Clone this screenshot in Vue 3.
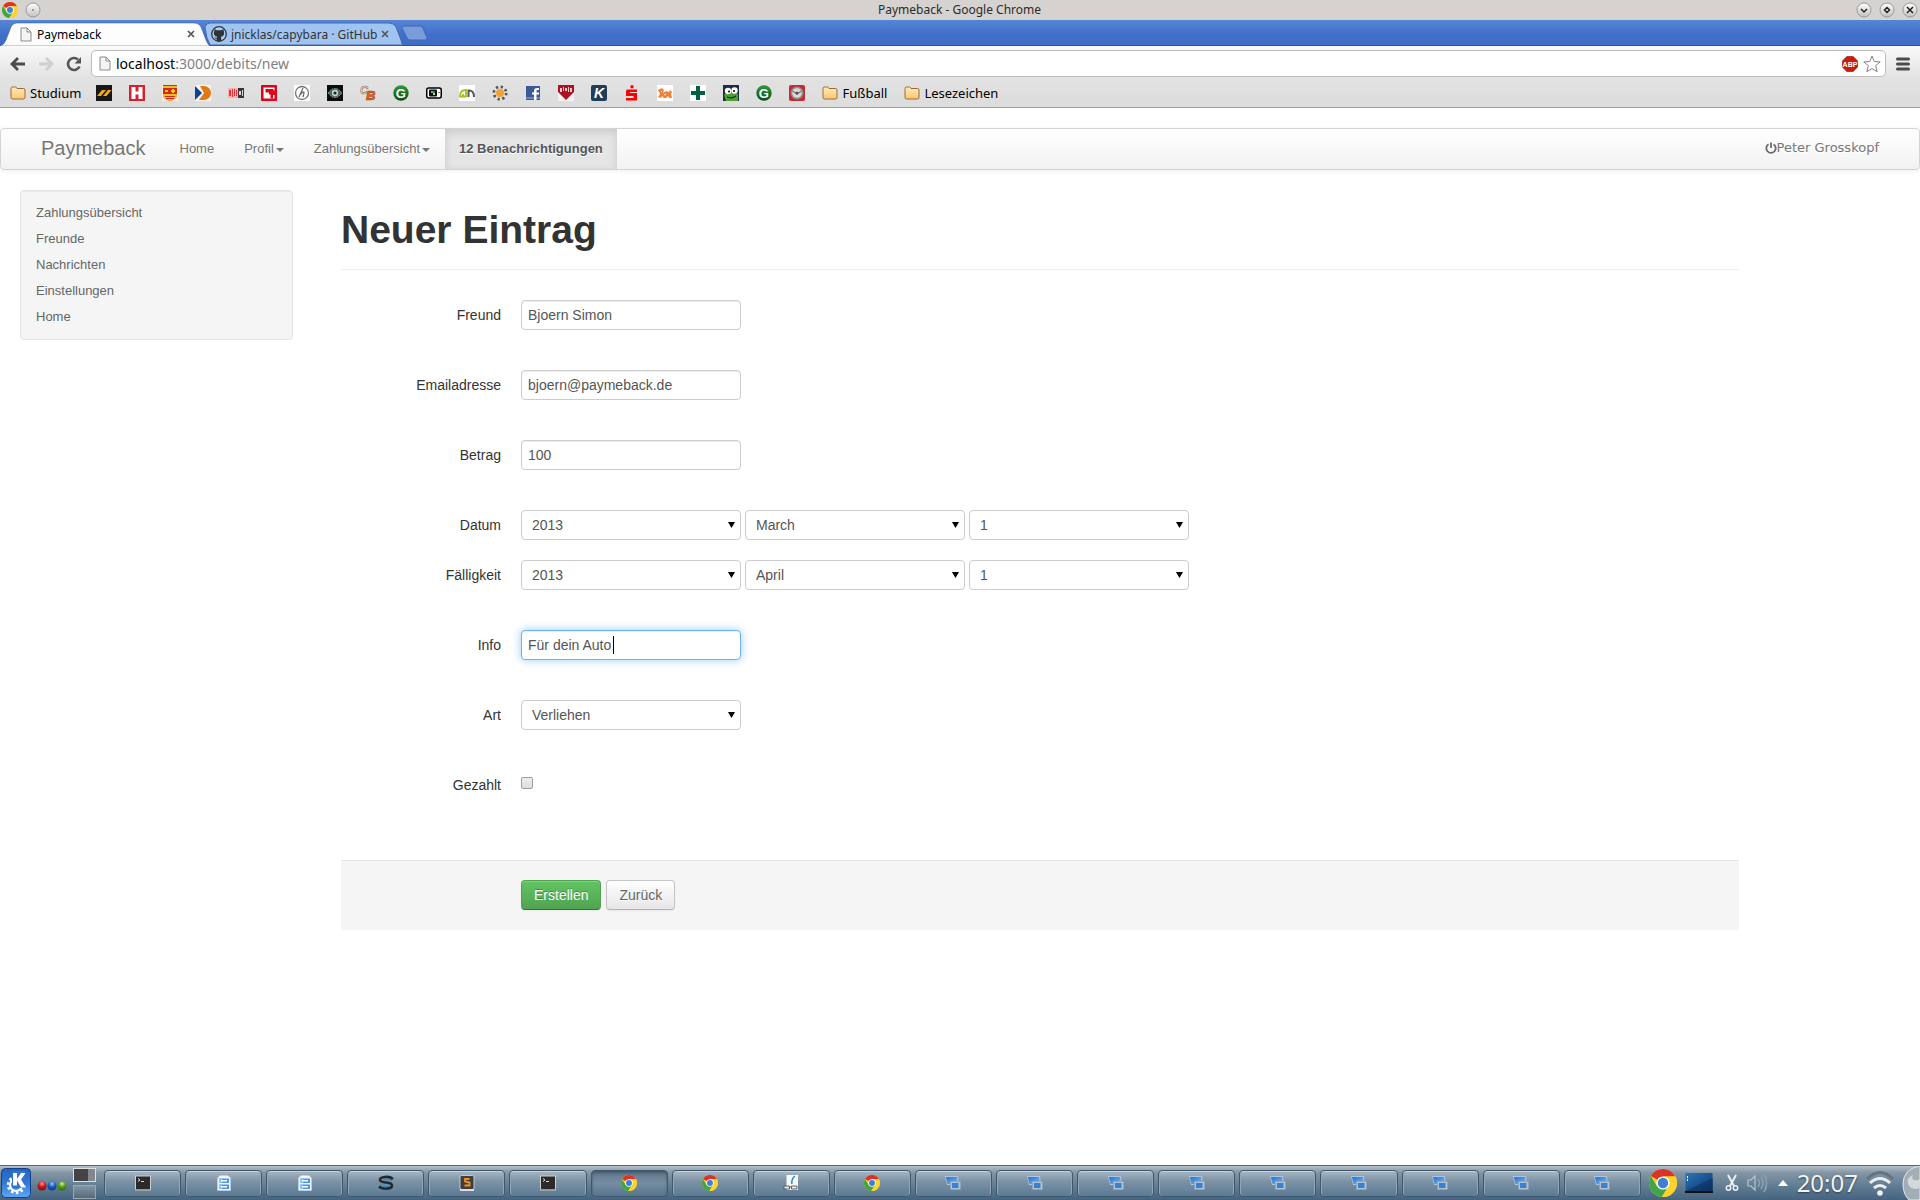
<script setup>
import { ref } from 'vue'

const gLetter = [{ t: 'G', x: 2.8, y: 12.5, size: 13, fill: '#fff' }]
const bookmarks = [
  { icon: 'yellow' }, { icon: 'hred' }, { icon: 'crest' }, { icon: 'dblue' }, { icon: 'bildde' }, { icon: 'cred' },
  { icon: 'hscript' }, { icon: 'eye' },
  {
    icon: 'blank',
    letters: [
      { t: 'C', x: 0, y: 9, size: 11, fill: '#fff', stroke: '#7d5a50', slant: true },
      { t: 'B', x: 6, y: 15, size: 13, fill: '#ef6a14', stroke: '#a33b08', slant: true },
    ],
  },
  { icon: 'green', letters: gLetter },
  { icon: 'computer' }, { icon: 'an' }, { icon: 'sun' }, { icon: 'facebook' }, { icon: 'heart' },
  { icon: 'kblue', letters: [{ t: 'K', x: 3, y: 13, size: 14, fill: '#fff', slant: true }] },
  { icon: 'sparkasse' }, { icon: 'lion' }, { icon: 'plus' }, { icon: 'frog' },
  { icon: 'green', letters: gLetter },
  { icon: 'seal' },
]
const tasks = [
  'terminal', 'cabinet', 'cabinet', 'swirl', 'sublime', 'terminal', 'chrome', 'chrome', 'reader', 'chrome',
  ...Array(9).fill('windows'),
]
const activeTask = 6
const sideLinks = ['Zahlungsübersicht', 'Freunde', 'Nachrichten', 'Einstellungen', 'Home']

const form = ref({
  freund: 'Bjoern Simon',
  email: 'bjoern@paymeback.de',
  betrag: '100',
  info: 'Für dein Auto',
  art: 'Verliehen',
  gezahlt: false,
})
const dates = ref({
  datum: { year: '2013', month: 'March', day: '1' },
  faelligkeit: { year: '2013', month: 'April', day: '1' },
})
const years = ['2012', '2013', '2014']
const months = ['January', 'February', 'March', 'April', 'May', 'June', 'July', 'August', 'September', 'October', 'November', 'December']
const days = Array.from({ length: 31 }, (_, i) => String(i + 1))
</script>

<template>
  <svg class="defs" aria-hidden="true">
    <defs>
      <linearGradient id="g-folder" x1="0" y1="0" x2="0" y2="1"><stop offset="0" stop-color="#ffeab8" /><stop offset="1" stop-color="#fbc772" /></linearGradient>
      <linearGradient id="g-green" x1="0" y1="0" x2="0" y2="1"><stop offset="0" stop-color="#2f9a3c" /><stop offset="1" stop-color="#064d14" /></linearGradient>
      <linearGradient id="g-knob" x1="0" y1="0" x2="0" y2="1"><stop offset="0" stop-color="#fff" /><stop offset="1" stop-color="#c4c1be" /></linearGradient>
      <linearGradient id="g-kde" x1="0" y1="0" x2="0" y2="1"><stop offset="0" stop-color="#2a62b8" /><stop offset="0.5" stop-color="#2f78d8" /><stop offset="1" stop-color="#5fa8f5" /></linearGradient>
      <linearGradient id="g-screen" x1="0" y1="0" x2="1" y2="1"><stop offset="0" stop-color="#2a77b5" /><stop offset="1" stop-color="#0c3470" /></linearGradient>
      <linearGradient id="g-win" x1="0" y1="0" x2="1" y2="1"><stop offset="0" stop-color="#2a70c8" /><stop offset="1" stop-color="#7db8f0" /></linearGradient>
      <linearGradient id="g-tabw" x1="0" y1="0" x2="0" y2="1"><stop offset="0" stop-color="#fff" /><stop offset="1" stop-color="#fbfbfb" /></linearGradient>
      <radialGradient id="g-red" cx="0.5" cy="0.25" r="0.7"><stop offset="0" stop-color="#ff9a9a" /><stop offset="0.5" stop-color="#cf1a1a" /><stop offset="1" stop-color="#8d0c0c" /></radialGradient>
      <radialGradient id="g-blue" cx="0.5" cy="0.25" r="0.7"><stop offset="0" stop-color="#a5ccff" /><stop offset="0.5" stop-color="#1c5fc0" /><stop offset="1" stop-color="#0b3a88" /></radialGradient>
      <radialGradient id="g-lime" cx="0.5" cy="0.25" r="0.7"><stop offset="0" stop-color="#d4f5a0" /><stop offset="0.5" stop-color="#5ba01a" /><stop offset="1" stop-color="#38700a" /></radialGradient>
    </defs>
    <symbol id="i-chrome" viewBox="0 0 28 28">
      <circle cx="14" cy="14" r="14" fill="#fdd22c" />
      <path d="M14 14L1.900 7A14 14 0 0 1 26.300 7.500H14z" fill="#dd3226" />
      <path d="M14 14l-6 3.500L1.900 7A14 14 0 0 0 12.800 28l5.500-9z" fill="#3fa548" />
      <path d="M14 7.500h12.300A14 14 0 0 1 12.800 28l6.500-10z" fill="#fdd22c" />
      <circle cx="14" cy="14" r="6.600" fill="#fff" /><circle cx="14" cy="14" r="5.200" fill="#3d7fd1" />
    </symbol>
    <symbol id="i-page" viewBox="0 0 12 15">
      <path d="M1 1h6l4 4v9H1z" fill="#f4f4f4" stroke="#8a8a8a" /><path d="M7 1v4h4" fill="none" stroke="#8a8a8a" />
    </symbol>
    <symbol id="i-folder" viewBox="0 0 16 14">
      <path d="M1 2.500q0-1.500 1.500-1.500h3q1 0 1.500 1.500h6.500q1.500 0 1.500 1.500v7.500q0 1.500-1.500 1.500h-11q-1.500 0-1.500-1.500z" fill="url(#g-folder)" stroke="#9a6a3c" />
    </symbol>
    <symbol id="i-github" viewBox="0 0 16 16">
      <circle cx="8" cy="8" r="7.300" fill="#a9cdf5" stroke="#303438" stroke-width="1.300" />
      <path d="M3.500 3l2.200 1.200h4.600L12.500 3l.4 2.800c.8 3-.6 4.500-2.900 4.900l.4 4.300H5.600v-2.200C4.500 13 4 12 3.300 11.300c1 0 1.400.9 2.400.7l.4-1.300C3.700 10.300 2.300 8.800 3.100 5.800z" fill="#303438" />
    </symbol>
    <symbol id="i-blank" viewBox="0 0 16 16" />
    <symbol id="i-yellow" viewBox="0 0 16 16"><rect width="16" height="16" fill="#17171a" /><path d="M1 11L6 5h4l-5 6zM7 11l5-6h3.500l-5 6z" fill="#f5a81c" /></symbol>
    <symbol id="i-hred" viewBox="0 0 16 16"><rect width="16" height="16" fill="#d8202c" /><path d="M2.500 2h4v4.500h3V2h4v12h-4V9.500h-3V14h-4z" fill="#fff" /></symbol>
    <symbol id="i-crest" viewBox="0 0 16 16"><rect width="16" height="16" fill="#f3efdf" /><path d="M1 0h14v10q0 4-7 6-7-2-7-6z" fill="#d42a1c" /><path d="M1 9h14v2q-1 3-7 5-6-2-7-5zM1 1h14v2H1z" fill="#f3bd22" /><path d="M3 11h10v1H3zM4 13h8v1H4z" fill="#c92a1c" /><path d="M9 5h4v2H9zM10 4h2v4h-2zM3 5h3v2H3z" fill="#f6d21e" /></symbol>
    <symbol id="i-dblue" viewBox="0 0 16 16"><rect width="16" height="16" fill="#f6f4ef" /><path d="M0 1l7 7-7 7z" fill="#103f91" /><path d="M5 1h4a7 7 0 0 1 0 14H4l5-7z" fill="#e07a12" /></symbol>
    <symbol id="i-bildde" viewBox="0 0 16 16"><rect y="3" width="10" height="10" fill="#f7b1b3" /><rect x="10" y="3" width="6" height="10" fill="#32363a" /><path d="M1 5h2v6H1zM4 4h1v8H4zM6 4h1v7H6zM8 5h1v6H8z" fill="#e33437" /><path d="M11 6h2v4h-2zM14 5h1v6h-1z" fill="#d9d9d9" /></symbol>
    <symbol id="i-cred" viewBox="0 0 16 16"><rect width="16" height="16" rx="1" fill="#e2001a" /><rect x="2.500" y="2.500" width="11" height="11" fill="#fff" /><path d="M4.500 4h8v1.500H16V10h-4v3.500H9.500V9.500H8v-2H4.500z" fill="#e2001a" /></symbol>
    <symbol id="i-hscript" viewBox="0 0 16 16"><rect width="16" height="16" fill="#fff" /><circle cx="8" cy="8" r="6.500" fill="none" stroke="#777" stroke-width="1.300" /><path d="M5 12L9 3M6 10q4-5 4-2l-1 4" fill="none" stroke="#666" stroke-width="1.200" /></symbol>
    <symbol id="i-eye" viewBox="0 0 16 16"><rect width="16" height="16" fill="#0b0c0d" /><path d="M1 8q7-9 14 0-7 9-14 0z" fill="#4c625b" stroke="#9cb0a8" stroke-dasharray="1.500 1" /><circle cx="8" cy="8" r="3.200" fill="#b9d6cd" /><circle cx="8" cy="8" r="1.600" fill="#20272a" /></symbol>
    <symbol id="i-green" viewBox="0 0 16 16"><circle cx="8" cy="8" r="7.700" fill="url(#g-green)" /></symbol>
    <symbol id="i-computer" viewBox="0 0 16 16"><rect x="0.750" y="3" width="14.500" height="10" rx="2" fill="#fff" stroke="#000" stroke-width="1.500" /><rect x="3" y="4.500" width="8" height="7" rx="1" fill="#111" /><path d="M5 6h2v2H5z" fill="#4ea5f0" /><path d="M7 6h2v2H7z" fill="#3a7d4a" /><path d="M7 8h2v2H7z" fill="#e8d13c" /><path d="M12.500 7h1v1h-1z" fill="#000" /></symbol>
    <symbol id="i-an" viewBox="0 0 16 16"><rect width="16" height="16" fill="#fff" /><path d="M1 11.500Q1 5 7 5v6.500zM4 11V9" fill="none" stroke="#9cc41c" stroke-width="1.800" /><path d="M9.500 12V5.500Q15 5 15 12" fill="none" stroke="#55585a" stroke-width="2" /></symbol>
    <symbol id="i-sun" viewBox="0 0 16 16"><circle cx="8" cy="8" r="6" fill="none" stroke="#555" stroke-width="3" stroke-dasharray="2.200 2.510" /><circle cx="8" cy="8" r="4.800" fill="#ddd" /><circle cx="8" cy="8" r="4" fill="#f7a032" /></symbol>
    <symbol id="i-facebook" viewBox="0 0 16 16"><rect x="1" y="1" width="14" height="14" fill="#3b5998" /><rect x="1" y="12" width="14" height="2" fill="#6d84b4" /><path d="M9 15V9.500H7v-2h2V6q0-3 3-3h2v2h-1.500Q11.500 5 11.500 6v1.500H14v2h-2.500V15z" fill="#fff" /></symbol>
    <symbol id="i-heart" viewBox="0 0 16 16"><rect width="16" height="16" fill="#f4f1ef" /><path d="M0 0h16v7l-8 8-8-8z" fill="#b01023" /><path d="M2 3h2v4H2zM5 2h1v4H5zM7 3h2v3H7zM10 2h1v5h-1zM12 3h2v4h-2z" fill="#e8c9cc" /></symbol>
    <symbol id="i-kblue" viewBox="0 0 16 16"><rect width="16" height="16" rx="2" fill="#1f3c58" /></symbol>
    <symbol id="i-sparkasse" viewBox="0 0 16 16"><circle cx="8" cy="1.700" r="1.700" fill="#f00" /><path d="M3 4.500h10v2.500H6v1h7v7.500H2V13h7.500v-2H2V6z" fill="#f00" /></symbol>
    <symbol id="i-lion" viewBox="0 0 16 16"><rect width="16" height="16" fill="#fff" /><path d="M1 12l2-3-2-4 4-2 2 2-1 3 3-2 3 1 1-2 2 2-1 2 1 4h-3l-1-2-2 2H7l-2-2-1 2z" fill="#f3803a" /><path d="M4 6l1 1M7 10l2-1" stroke="#fff" /></symbol>
    <symbol id="i-plus" viewBox="0 0 16 16"><rect width="16" height="16" fill="#fff" /><path d="M6 1h4v5h5v4h-5v5H6v-5H1V6h5z" fill="#04603f" /></symbol>
    <symbol id="i-frog" viewBox="0 0 16 16"><rect width="16" height="16" fill="#1c2c44" /><path d="M1 10q7-7 14-1v7H3z" fill="#4f9f2c" /><path d="M4 12q5 2 9-1" fill="none" stroke="#16380f" stroke-width="1.300" /><circle cx="5" cy="6" r="3.200" fill="#fff" /><circle cx="11.500" cy="5.500" r="3.200" fill="#fff" /><circle cx="6" cy="6.500" r="1" /><circle cx="11" cy="6" r="1" /></symbol>
    <symbol id="i-seal" viewBox="0 0 16 16"><rect width="16" height="16" rx="2" fill="#c42b31" /><circle cx="8" cy="8" r="6.500" fill="#8b8c8e" /><circle cx="8" cy="8" r="4.800" fill="#d9d9d9" /><path d="M3.500 6L8 9l4.500-3" fill="none" stroke="#777" stroke-width="1.300" /><circle cx="8" cy="8" r="1.600" fill="#555" /></symbol>
    <symbol id="i-terminal" viewBox="0 0 16 16"><rect x="0.500" y="1" width="15" height="14" fill="#2a2a2a" stroke="#d0d0d0" /><rect x="0.500" y="14" width="15" height="1.500" fill="#999" /><path d="M3 3.500l2 1.500-2 1.500M6 6.500h3" fill="none" stroke="#ddd" /></symbol>
    <symbol id="i-cabinet" viewBox="0 0 16 16"><path d="M1.500 3L4 0.500h8L14.500 3v12.500h-13z" fill="#f2f6fb" stroke="#c2ced9" stroke-width="0.700" /><path d="M3 3.500h10V8H3zM3 9.500h10V14H3z" fill="#4a97e8" /><path d="M3 3.500h3V8H3zM3 9.500h3V14H3z" fill="#8cc3f7" /><path d="M5 5h6v1.500H5zM5 11h6v1.500H5z" fill="#fff" /></symbol>
    <symbol id="i-swirl" viewBox="0 0 16 16"><path d="M15 4Q12 1.500 7 2 1.500 2.500 2 5q.5 2 6 2.500 6 .5 6 3 0 3-6 3-5 0-7-2" fill="none" stroke="#23272c" stroke-width="2.600" /><path d="M14 6Q9 3 5 5M2 10q4 3 9 1" fill="none" stroke="#2a8cc8" stroke-width="1.300" /></symbol>
    <symbol id="i-sublime" viewBox="0 0 16 16"><rect x="1" y="0.500" width="14" height="14" rx="1.500" fill="#3f3f3f" stroke="#ddd" stroke-width="0.800" /><path d="M1 14h14v2H1z" fill="#ddd" /><path d="M10.500 4H6v2.500l4.500 1V10.500H5.500" fill="none" stroke="#f39019" stroke-width="1.800" /></symbol>
    <symbol id="i-reader" viewBox="0 0 16 16"><path d="M3.500 0h11.500v15H3.500z" fill="#f6f8fa" /><path d="M12 1Q8 4 9 9" fill="none" stroke="#2a87d0" stroke-width="1.500" /><path d="M1 11h5.500v3H1zM8.500 11H14v3H8.500zM6.500 12h2" fill="#e8e8e8" stroke="#555" stroke-width="0.900" /></symbol>
    <symbol id="i-windows" viewBox="0 0 16 16"><path d="M0 1h13l1 9H2z" fill="#a9c6e6" /><path d="M1 2h11l1 7H2.500z" fill="url(#g-win)" /><rect x="5.500" y="6.500" width="10" height="8" fill="#b4c2cf" stroke="#8fa3b5" stroke-width="0.700" /><rect x="7" y="8" width="6.500" height="5" fill="#3980d3" /></symbol>
  </svg>

  <div class="desktop">
    <header class="titlebar">
      <svg class="i16" viewBox="0 0 28 28"><use href="#i-chrome" /></svg>
      <svg class="knob" viewBox="0 0 16 16"><circle cx="8" cy="8" r="7" fill="url(#g-knob)" stroke="#999" /><circle cx="8" cy="8" r="0.800" fill="#444" /></svg>
      <span class="window-title">Paymeback - Google Chrome</span>
      <div class="window-buttons">
        <button type="button" aria-label="Minimieren"><svg class="knob" viewBox="0 0 16 16"><circle cx="8" cy="8" r="7" fill="url(#g-knob)" stroke="#999" /><path d="M5 7l3 3 3-3" fill="none" stroke="#222" stroke-width="1.500" /></svg></button>
        <button type="button" aria-label="Maximieren"><svg class="knob" viewBox="0 0 16 16"><circle cx="8" cy="8" r="7" fill="url(#g-knob)" stroke="#999" /><path d="M8 5.500L10.500 8 8 10.500 5.500 8z" fill="none" stroke="#222" stroke-width="1.500" /></svg></button>
        <button type="button" aria-label="Schließen"><svg class="knob" viewBox="0 0 16 16"><circle cx="8" cy="8" r="7" fill="url(#g-knob)" stroke="#999" /><path d="M5 5l6 6M11 5l-6 6" stroke="#222" stroke-width="1.500" /></svg></button>
      </div>
    </header>

    <div class="tabstrip">
      <div class="tab tab-active">
        <svg class="tab-shape" viewBox="0 0 210 24" preserveAspectRatio="none"><path d="M0 24Q4 23 6 18L11 5Q13 1 17 1H194Q199 1 201 5L206 18Q208 23 210 24z" fill="url(#g-tabw)" stroke="#2f55a0" stroke-opacity="0.500" /></svg>
        <svg class="page-icon" viewBox="0 0 12 15"><use href="#i-page" /></svg>
        <span class="tab-title">Paymeback</span>
        <button type="button" class="tab-close" aria-label="Tab schließen"><svg viewBox="0 0 8 8"><path d="M1 1l6 6M7 1L1 7" stroke="#555" stroke-width="1.700" /></svg></button>
      </div>
      <div class="tab tab-back">
        <svg class="tab-shape" viewBox="0 0 198 24" preserveAspectRatio="none"><path d="M5 23Q1 16 0 5Q1 1 5 1H184Q189 1 191 5L196 18Q197 23 198 23z" fill="#a0c4f2" stroke="#4468ae" /></svg>
        <svg class="i16" viewBox="0 0 16 16"><use href="#i-github" /></svg>
        <span class="tab-title">jnicklas/capybara · GitHub</span>
        <button type="button" class="tab-close" aria-label="Tab schließen"><svg viewBox="0 0 8 8"><path d="M1 1l6 6M7 1L1 7" stroke="#555" stroke-width="1.700" /></svg></button>
      </div>
      <button type="button" class="new-tab" aria-label="Neuer Tab"><svg viewBox="0 0 27 16"><path d="M3 1h16q2 0 3 2l4 10q0 2-2 2H9q-2 0-3-2L1 3q0-2 2-2z" fill="#7b9cdb" stroke="#3f66b5" /></svg></button>
    </div>

    <div class="chrome-bars">
      <div class="toolbar">
        <div class="nav-buttons">
          <button type="button" aria-label="Zurück"><svg class="i16" viewBox="0 0 16 16"><path d="M15 8H3M8 2L2 8l6 6" fill="none" stroke="#4b4b4b" stroke-width="2.800" /></svg></button>
          <button type="button" aria-label="Vorwärts"><svg class="i16" viewBox="0 0 16 16"><path d="M1 8h12M8 2l6 6-6 6" fill="none" stroke="#cfcfcf" stroke-width="2.800" /></svg></button>
          <button type="button" aria-label="Neu laden"><svg class="i16" viewBox="0 0 16 16"><path d="M13.500 10.500A6 6 0 1 1 12 3.500" fill="none" stroke="#555" stroke-width="2.600" /><path d="M15 1v6.500H8.500z" fill="#555" /></svg></button>
        </div>
        <div class="omnibox">
          <svg class="page-icon" viewBox="0 0 12 15"><use href="#i-page" /></svg>
          <span class="url">localhost<span class="url-rest">:3000/debits/new</span></span>
          <svg class="i16" viewBox="0 0 16 16"><path d="M5 0h6l5 5v6l-5 5H5l-5-5V5z" fill="#c81e0e" stroke="#8c8c8c" stroke-width="0.500" /><text x="8" y="10.500" text-anchor="middle" class="logo-text" font-size="7" fill="#fff">ABP</text></svg>
          <svg class="star" viewBox="0 0 18 18"><path d="M9 1l2.200 5.500 6 .4-4.600 3.800 1.600 6L9 13.600l-5.200 3.100 1.600-6L.8 6.900l6-.4z" fill="#fff" stroke="#828282" /></svg>
        </div>
        <button type="button" class="menu" aria-label="Menü"><svg viewBox="0 0 14 14"><path d="M1.500 2h11M1.500 7h11M1.500 12h11" stroke="#4c4c4c" stroke-width="3" stroke-linecap="round" /></svg></button>
      </div>

      <nav class="bookmarks" aria-label="Lesezeichen">
        <a href="#" class="folder"><svg viewBox="0 0 16 14"><use href="#i-folder" /></svg>Studium</a>
        <a v-for="(b, i) in bookmarks" :key="i" href="#" :aria-label="b.icon">
          <svg class="i16" viewBox="0 0 16 16">
            <use :href="'#i-' + b.icon" />
            <text v-for="l in b.letters" :key="l.t" class="logo-text" :class="{ slant: l.slant }" :x="l.x" :y="l.y" :font-size="l.size" :fill="l.fill" :stroke="l.stroke || 'none'" stroke-width="0.600">{{ l.t }}</text>
          </svg>
        </a>
        <a href="#" class="folder"><svg viewBox="0 0 16 14"><use href="#i-folder" /></svg>Fußball</a>
        <a href="#" class="folder"><svg viewBox="0 0 16 14"><use href="#i-folder" /></svg>Lesezeichen</a>
      </nav>
    </div>

    <div class="page">
      <nav class="navbar">
        <a href="#" class="brand">Paymeback</a>
        <a href="#" class="nav-link">Home</a>
        <a href="#" class="nav-link">Profil<b class="caret"></b></a>
        <a href="#" class="nav-link">Zahlungsübersicht<b class="caret"></b></a>
        <a href="#" class="nav-link nav-active">12 Benachrichtigungen</a>
        <a href="#" class="user"><svg viewBox="0 0 12 12"><path d="M3.500 2.200A4.700 4.700 0 1 0 8.500 2.200M6 0.500V6" fill="none" stroke="#6a6a6a" stroke-width="1.800" /></svg>Peter Grosskopf</a>
      </nav>

      <div class="columns">
        <aside class="well">
          <a v-for="l in sideLinks" :key="l" href="#">{{ l }}</a>
        </aside>

        <main>
          <h1>Neuer Eintrag</h1>
          <form @submit.prevent>
            <div class="row spaced">
              <label for="freund">Freund</label>
              <input id="freund" v-model="form.freund" type="text">
            </div>
            <div class="row spaced">
              <label for="email">Emailadresse</label>
              <input id="email" v-model="form.email" type="text">
            </div>
            <div class="row spaced">
              <label for="betrag">Betrag</label>
              <input id="betrag" v-model="form.betrag" type="text">
            </div>
            <div class="row">
              <label for="datum">Datum</label>
              <select id="datum" v-model="dates.datum.year"><option v-for="y in years" :key="y">{{ y }}</option></select>
              <select v-model="dates.datum.month" aria-label="Datum Monat"><option v-for="m in months" :key="m">{{ m }}</option></select>
              <select v-model="dates.datum.day" aria-label="Datum Tag"><option v-for="d in days" :key="d">{{ d }}</option></select>
            </div>
            <div class="row spaced">
              <label for="faelligkeit">Fälligkeit</label>
              <select id="faelligkeit" v-model="dates.faelligkeit.year"><option v-for="y in years" :key="y">{{ y }}</option></select>
              <select v-model="dates.faelligkeit.month" aria-label="Fälligkeit Monat"><option v-for="m in months" :key="m">{{ m }}</option></select>
              <select v-model="dates.faelligkeit.day" aria-label="Fälligkeit Tag"><option v-for="d in days" :key="d">{{ d }}</option></select>
            </div>
            <div class="row spaced">
              <label for="info">Info</label>
              <div class="field">
                <input id="info" v-model="form.info" class="focused" type="text">
                <i class="cursor" aria-hidden="true"></i>
              </div>
            </div>
            <div class="row spaced">
              <label for="art">Art</label>
              <select id="art" v-model="form.art"><option>Verliehen</option><option>Geliehen</option></select>
            </div>
            <div class="row spaced">
              <label for="gezahlt">Gezahlt</label>
              <input id="gezahlt" v-model="form.gezahlt" type="checkbox">
            </div>
            <div class="actions">
              <button type="submit" class="btn btn-success">Erstellen</button>
              <button type="button" class="btn">Zurück</button>
            </div>
          </form>
        </main>
      </div>
    </div>

    <footer class="taskbar">
      <button type="button" class="kmenu" aria-label="K-Menü">
        <svg viewBox="0 0 30 30"><rect x="0.500" y="0.500" width="29" height="29" rx="4" fill="url(#g-kde)" stroke="#123f8c" /><circle cx="15" cy="17" r="8" fill="none" stroke="#fff" stroke-width="2.500" stroke-dasharray="2.600 2.430" /><circle cx="15" cy="17" r="6" fill="none" stroke="#fff" stroke-width="2.200" /><path d="M11 3h13v17H11z" fill="#2f74d0" /><path d="M12 5h4v6l4-6h4.500l-4.500 6.500 5 8h-5l-4-7v5h-4z" fill="#fff" /></svg>
      </button>
      <svg class="dots" viewBox="0 0 30 10"><circle cx="5" cy="5" r="4.500" fill="url(#g-red)" /><circle cx="15" cy="5" r="4.500" fill="url(#g-blue)" /><circle cx="25" cy="5" r="4.500" fill="url(#g-lime)" /></svg>
      <div class="pager"><span class="desk desk-on"></span><span class="desk"></span></div>
      <div class="tasks">
        <button v-for="(t, i) in tasks" :key="i" type="button" class="task" :class="{ 'task-on': i === activeTask }" :aria-label="t">
          <svg class="i16" viewBox="0 0 16 16"><use :href="'#i-' + t" /></svg>
        </button>
      </div>
      <div class="tray">
        <svg class="t28" viewBox="0 0 28 28"><use href="#i-chrome" /></svg>
        <svg class="t28" viewBox="0 0 28 22"><rect x="0.500" y="1" width="27" height="18" fill="url(#g-screen)" /><path d="M0 19L28 6v13z" fill="#0a2a5a" opacity="0.500" /><path d="M2 4h1v2H2zM2 7h1v2H2z" fill="#dfe" /><rect y="19" width="28" height="2" fill="#111" /></svg>
        <svg class="t14" viewBox="0 0 14 18"><path d="M3 1l6 11M11 1L5 12" stroke="#eee" stroke-width="2" /><circle cx="3.500" cy="14" r="2.200" fill="none" stroke="#eee" stroke-width="1.500" /><circle cx="10.500" cy="14" r="2.200" fill="none" stroke="#eee" stroke-width="1.500" /></svg>
        <svg class="t22" viewBox="0 0 22 22"><path d="M1 8h3l4-4v14l-4-4H1z" fill="none" stroke="#b8c4ce" stroke-width="1.200" /><path d="M11 7q3 4 0 8M14 5q4 6 0 12M17 2q5 9 0 18" fill="none" stroke="#8e9fae" stroke-width="1.600" /></svg>
        <svg class="t12" viewBox="0 0 12 8"><path d="M6 1l5 6H1z" fill="#fff" /></svg>
        <span class="clock">20:07</span>
        <svg class="t28" viewBox="0 0 28 26"><path d="M1 9Q14-4 27 9" fill="none" stroke="#66747f" stroke-width="3" /><path d="M4 13Q14 4 24 13" fill="none" stroke="#eee" stroke-width="3" /><path d="M8 18q6-5 12 0" fill="none" stroke="#eee" stroke-width="3" /><circle cx="14" cy="23" r="2.800" fill="#f4f4f4" /></svg>
        <svg class="cashew" viewBox="0 0 18 34"><path d="M18 0Q1 3 1 18q0 10 6 16h11z" fill="#a3adb5" stroke="#e4e8eb" /><path d="M18 13q-3 2-6 1-3-2-1-5-7 3-5 9 3 7 12 4z" fill="#d3d8dc" /></svg>
      </div>
    </footer>
  </div>
</template>

<style>
body { margin: 0; background: #fff; }
</style>

<style scoped>
* { box-sizing: border-box; }
a { color: inherit; text-decoration: none; }
button { border: 0; padding: 0; margin: 0; background: none; font: inherit; color: inherit; }
svg { display: block; flex: none; }
.defs { position: absolute; width: 0; height: 0; }
.i16 { width: 16px; height: 16px; }
.logo-text { font-family: "Liberation Sans", Arial, sans-serif; font-weight: bold; }
.slant { font-style: italic; }
.desktop { display: flex; flex-direction: column; min-height: 100vh; font-family: "Noto Sans", "Open Sans", sans-serif; }

.titlebar { display: flex; align-items: center; gap: 7px; height: 20px; padding: 0 2px; background: #d6d2cf; }
.knob { width: 16px; height: 16px; }
.window-title { flex: 1; padding-left: 22px; text-align: center; font-size: 12px; line-height: 20px; color: #2b2b2b; }
.window-buttons { display: flex; gap: 7px; }

.tabstrip { display: flex; align-items: flex-end; height: 26px; background: linear-gradient(#5585d6, #416fc8 60%, #3f6cc6); border-bottom: 1px solid #2c519a; }
.tab { position: relative; display: flex; align-items: center; height: 24px; margin-bottom: -1px; font-size: 12px; color: #000; }
.tab > * { position: relative; }
.tab .tab-shape { position: absolute; inset: 0; width: 100%; height: 100%; }
.tab-active { z-index: 1; width: 210px; padding: 0 15px 0 20px; gap: 5px; }
.tab-back { width: 198px; padding: 0 14px 0 6px; gap: 4px; margin-left: -5px; color: #333; }
.tab-title { flex: 1; white-space: nowrap; }
.tab-close svg { width: 8px; height: 8px; }
.page-icon { width: 12px; height: 15px; }
.new-tab { align-self: center; margin-left: -2px; }
.new-tab svg { width: 27px; height: 16px; }

.chrome-bars { background: linear-gradient(#fafafa, #e2e2e2 32px, #dcdcdc); border-bottom: 1px solid #9f9f9f; }
.toolbar { display: flex; align-items: center; height: 35px; padding: 0 10px; }
.nav-buttons { display: flex; gap: 12px; padding-right: 9px; }
.omnibox { display: flex; flex: 1; align-items: center; gap: 5px; height: 27px; padding: 0 4px 0 7px; background: #fff; border: 1px solid #bdbdbd; border-radius: 5px; }
.url { flex: 1; font-size: 14px; line-height: 20px; color: #000; }
.url-rest { color: #808080; }
.star { width: 18px; height: 18px; }
.menu { margin-left: 10px; }
.menu svg { width: 14px; height: 14px; }
.bookmarks { display: flex; align-items: center; gap: 17px; height: 26px; padding: 0 10px 2px; font-size: 13px; line-height: 20px; color: #000; }
.folder { display: flex; align-items: center; gap: 4px; }
.folder:first-child { margin-right: -2px; }
.folder svg { width: 16px; height: 14px; }

.page { flex: 1; padding-top: 20px; background: #fff; font-family: "Liberation Sans", Arial, sans-serif; color: #333; }
.navbar { display: flex; align-items: stretch; height: 42px; padding: 0 40px; border: 1px solid #d4d4d4; border-radius: 4px; background: linear-gradient(#fff, #f2f2f2); box-shadow: 0 1px 4px rgba(0, 0, 0, 0.07); color: #777; font-size: 13px; line-height: 40px; text-shadow: 0 1px 0 #fff; }
.brand { margin-right: 19px; font-size: 20px; line-height: 38px; }
.nav-link { padding: 0 15px; }
.caret { display: inline-block; margin-left: 2px; border: 4px solid transparent; border-top-color: #777; border-bottom: 0; vertical-align: middle; }
.nav-active { padding: 0 14px; background: #e5e5e5; box-shadow: inset 0 3px 8px rgba(0, 0, 0, 0.125); color: #555; font-weight: bold; }
.user { display: flex; align-items: center; margin-left: auto; padding-bottom: 2px; font-family: "DejaVu Sans", sans-serif; line-height: 38px; }
.user svg { width: 12px; height: 12px; }

.columns { display: grid; grid-template-columns: 273fr 1398fr 113fr; column-gap: 48px; align-items: start; padding: 20px; }
.well { padding: 9px 15px; border: 1px solid #e3e3e3; border-radius: 4px; background: #f5f5f5; box-shadow: inset 0 1px 1px rgba(0, 0, 0, 0.05); font-size: 13px; line-height: 26px; color: #666; }
.well a { display: block; }
h1 { margin: 0 0 30px; padding: 20px 0 19px; border-bottom: 1px solid #eee; font-size: 39px; line-height: 40px; }
.row { display: flex; align-items: center; gap: 4px; height: 30px; margin-bottom: 20px; font-size: 14px; }
.row.spaced { margin-bottom: 40px; }
.row label { width: 160px; margin-right: 16px; text-align: right; line-height: 20px; }
input[type="text"], select { width: 220px; height: 30px; margin: 0; border: 1px solid #ccc; border-radius: 4px; background: #fff; box-shadow: inset 0 1px 1px rgba(0, 0, 0, 0.075); color: #555; font-family: inherit; font-size: 14px; line-height: 20px; outline: 0; }
input[type="text"] { padding: 4px 6px; }
select { appearance: none; padding: 4px 10px; background: #fff url("data:image/svg+xml,%3Csvg xmlns='http://www.w3.org/2000/svg' width='7' height='6'%3E%3Cpath d='M0 0h7L3.500 6z'/%3E%3C/svg%3E") no-repeat right 5px center; box-shadow: none; }
.field { position: relative; }
input.focused { border-color: #6db3ee; box-shadow: inset 0 1px 1px rgba(0, 0, 0, 0.075), 0 0 8px rgba(82, 168, 236, 0.6); }
.cursor { position: absolute; left: 92px; top: 6px; width: 1px; height: 18px; background: #000; }
input[type="checkbox"] { appearance: none; width: 12px; height: 12px; margin: 0 0 4px; border: 1px solid #9c9c9c; border-radius: 2px; background: linear-gradient(#eee, #dcdcdc); }
.actions { display: flex; gap: 5px; margin-top: 60px; padding: 19px 20px 20px 180px; border-top: 1px solid #e5e5e5; background: #f5f5f5; }
.btn { height: 30px; padding: 0 12px; border: 1px solid #c5c5c5; border-bottom-color: #b3b3b3; border-radius: 4px; background: linear-gradient(#fff, #e6e6e6); box-shadow: inset 0 1px 0 rgba(255, 255, 255, 0.2), 0 1px 2px rgba(0, 0, 0, 0.05); color: #666; font-size: 14px; line-height: 20px; text-shadow: 0 1px 1px rgba(255, 255, 255, 0.75); }
.btn-success { border-color: #51a351 #51a351 #387038; background: linear-gradient(#62c462, #51a351); color: #fff; text-shadow: 0 -1px 0 rgba(0, 0, 0, 0.25); }

.taskbar { display: flex; align-items: center; height: 35px; border-top: 1px solid #56697a; background: linear-gradient(#b3bfca, #8495a5 20%, #5f7c93 60%, #45637f); }
.kmenu { padding-left: 1px; }
.kmenu svg { width: 30px; height: 30px; }
.dots { width: 30px; height: 10px; margin: 6px 6px 0; }
.pager { display: flex; flex-direction: column; gap: 3px; width: 23px; }
.desk { height: 14px; border: 1px solid #9aa9b5; background: linear-gradient(#8496a4, #55697a); }
.desk-on { background: linear-gradient(90deg, #444 65%, #83878b 65%); border-color: #dde1e4; }
.tasks { display: flex; flex: 1; gap: 4px; padding: 0 8px; }
.task { display: flex; flex: 1; align-items: center; justify-content: center; height: 27px; border: 1px solid #40586c; border-radius: 4px; background: linear-gradient(#a9b7c3, #7d93a5 40%, #5a7a95); box-shadow: inset 0 1px 0 #c7d1da, inset 1px 0 0 #93a5b4, inset -1px 0 0 #93a5b4; }
.task-on { background: linear-gradient(#62788b, #748da1 50%, #56748e); box-shadow: inset 0 2px 3px #42586b; }
.tray { display: flex; align-items: center; gap: 8px; }
.t28 { width: 28px; height: 28px; }
.t14 { width: 14px; height: 18px; margin-left: 4px; }
.t22 { width: 22px; height: 22px; }
.t12 { width: 12px; height: 8px; }
.clock { font-size: 24px; line-height: 32px; color: #f2f4f6; text-shadow: 0 1px 2px #2b3d4e; }
.cashew { width: 18px; height: 34px; }
</style>
